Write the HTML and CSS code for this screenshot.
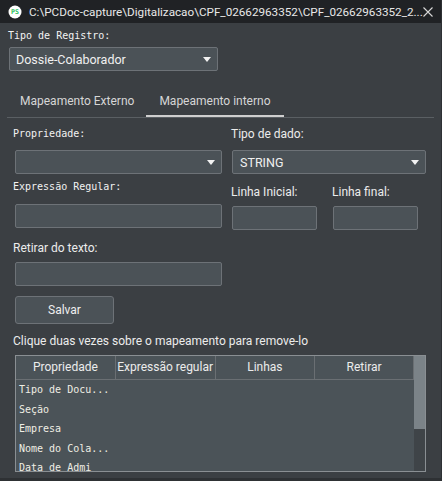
FILE: index.html
```html
<!DOCTYPE html>
<html>
<head>
<meta charset="utf-8">
<link rel="stylesheet" href="styles.css">
</head>
<body>
<div class="window">
  <div class="titlebar">
    <svg class="app-icon" width="14" height="14" viewBox="0 0 14 14">
      <circle cx="7" cy="7" r="6.5" fill="#ffffff"/>
      <text x="7" y="9.3" text-anchor="middle" font-family="DejaVu Sans Mono, monospace" font-size="6.5" font-weight="bold" fill="#1fbf5a">PS</text>
    </svg>
    <span class="title">C:\PCDoc-capture\Digitalizacao\CPF_02662963352\CPF_02662963352_2...</span>
    <svg class="close" width="10" height="10" viewBox="0 0 10 10">
      <path d="M0.5 0.5 L9.5 9.5 M9.5 0.5 L0.5 9.5" stroke="#d8d8d8" stroke-width="1.1" fill="none"/>
    </svg>
  </div>
  <div class="content">
    <div class="mono lbl lbl-tipo">Tipo de Registro:</div>
    <div class="combo combo-main"><span>Dossie-Colaborador</span><i class="arrow"></i></div>

    <div class="tabs">
      <div class="tab tab-ext">Mapeamento Externo</div>
      <div class="tab active">Mapeamento interno</div>
    </div>

    <div class="form">
      <div class="row row1">
        <div class="col left">
          <div class="mono lbl">Propriedade:</div>
          <div class="combo combo-prop"><span></span><i class="arrow"></i></div>
        </div>
        <div class="col right">
          <div class="sans lbl">Tipo de dado:</div>
          <div class="combo combo-type"><span>STRING</span><i class="arrow"></i></div>
        </div>
      </div>

      <div class="row row2">
        <div class="col left">
          <div class="mono lbl">Expressão Regular:</div>
          <div class="input input-wide"></div>
        </div>
        <div class="col right2">
          <div class="sub">
            <div class="sans lbl">Linha Inicial:</div>
            <div class="input input-small"></div>
          </div>
          <div class="sub">
            <div class="sans lbl">Linha final:</div>
            <div class="input input-small"></div>
          </div>
        </div>
      </div>

      <div class="row row3">
        <div class="col left">
          <div class="sans lbl">Retirar do texto:</div>
          <div class="input input-wide"></div>
        </div>
      </div>

      <button class="btn">Salvar</button>

      <div class="sans lbl hint">Clique duas vezes sobre o mapeamento para remove-lo</div>

      <div class="table">
        <div class="table-main">
          <div class="thead">
            <div class="th">Propriedade</div>
            <div class="th">Expressão regular</div>
            <div class="th">Linhas</div>
            <div class="th">Retirar</div>
          </div>
          <div class="tbody">
            <div class="tr mono">Tipo de Docu...</div>
            <div class="tr mono">Seção</div>
            <div class="tr mono">Empresa</div>
            <div class="tr mono">Nome do Cola...</div>
            <div class="tr mono">Data de Admi</div>
          </div>
        </div>
        <div class="scrollbar"><div class="thumb"></div></div>
      </div>
    </div>
  </div>
</div>
</body>
</html>
```

FILE: styles.css
```css
html, body {
  margin: 0;
  padding: 0;
  background: #3b3f43;
}
.window {
  width: 442px;
  height: 481px;
  background: #3b3f43;
  box-sizing: border-box;
  border-right: 1px solid #2e3134;
  border-bottom: 3px solid #2e3134;
  overflow: hidden;
  color: #e6e6e6;
  font-family: "Open Sans", "Noto Sans", sans-serif;
}
.titlebar {
  height: 23px;
  background: #202225;
  display: flex;
  align-items: center;
  padding-left: 8px;
  box-sizing: border-box;
}
.app-icon { flex: none; }
.title {
  margin-left: 7px;
  font-family: "Roboto", "Open Sans", sans-serif;
  font-size: 11.7px;
  color: #e8e8e8;
  white-space: nowrap;
  flex: 1;
}
.close {
  flex: none;
  margin-right: 12px;
}
.content {
  padding: 0 8px;
}
.mono {
  font-family: "DejaVu Sans Mono", "Liberation Mono", monospace;
  font-size: 10px;
}
.sans {
  font-family: "Roboto", "Open Sans", sans-serif;
  font-size: 12px;
}
.lbl {
  line-height: 14px;
  color: #ececec;
  white-space: nowrap;
}
.mono.lbl {
  color: #f2f2f2;
}
.lbl-tipo {
  margin-top: 6px;
}
.combo, .input {
  box-sizing: border-box;
  background: #4b5257;
  border: 1px solid #6d7277;
  border-radius: 2px;
}
.combo {
  display: flex;
  align-items: center;
  justify-content: space-between;
  padding: 0 6px 0 6px;
  font-family: "Roboto", "Open Sans", sans-serif;
  font-size: 12.5px;
  color: #f0f0f0;
}
.arrow {
  width: 0;
  height: 0;
  border-left: 4.5px solid transparent;
  border-right: 4.5px solid transparent;
  border-top: 5px solid #f2f2f2;
  margin-top: 1px;
}
.combo-main {
  margin-top: 4px;
  margin-left: 1px;
  width: 209px;
  height: 24px;
}
.tabs {
  display: flex;
  margin-top: 17px;
  margin-left: -1px;
  width: 427px;
  border-bottom: 1px solid #5a5f63;
  height: 30px;
  box-sizing: border-box;
}
.tab {
  padding: 0 13px;
  font-family: "Roboto", "Open Sans", sans-serif;
  font-size: 12px;
  color: #d6d6d6;
  line-height: 27px;
  height: 29px;
  box-sizing: border-box;
  border-bottom: 2px solid transparent;
}
.tab.active {
  border-bottom-color: #cfcfcf;
  margin-left: -1px;
}
.form {
  padding-left: 5px;
}
.row {
  display: flex;
}
.col {
  display: flex;
  flex-direction: column;
}
.col.left {
  width: 218px;
}
.col.left .combo, .col.left .input {
  margin-left: 2px;
}
.row1 {
  margin-top: 9px;
}
.row1 .combo {
  margin-top: 9px;
  height: 24px;
}
.combo-prop { width: 207px; }
.combo-type { width: 194px; margin-left: 1px; padding-left: 7px; }
.row2 {
  margin-top: 6px;
}
.input-wide {
  width: 207px;
  height: 24px;
  margin-top: 10px;
}
.right2 {
  display: flex;
  flex-direction: row;
  padding-top: 5px;
}
.sub {
  display: flex;
  flex-direction: column;
  width: 101px;
}
.input-small {
  width: 85px;
  height: 24px;
  margin-top: 7px;
  margin-left: 1px;
}
.row3 {
  margin-top: 11px;
}
.row3 .input-wide {
  margin-top: 7px;
}
.btn {
  display: block;
  margin-top: 10px;
  margin-left: 2px;
  width: 99px;
  height: 28px;
  background: #4b5257;
  border: 1px solid #6d7277;
  border-radius: 3px;
  color: #efefef;
  font-family: "Roboto", "Open Sans", sans-serif;
  font-size: 12px;
  padding: 0;
}
.hint {
  margin-top: 10px;
}
.table {
  margin-top: 7px;
  margin-left: 2px;
  width: 411px;
  height: 117px;
  box-sizing: border-box;
  border: 1px solid #8a8f93;
  background: #4b5358;
  display: flex;
  overflow: hidden;
}
.table-main {
  flex: 1;
  overflow: hidden;
}
.thead {
  display: flex;
  height: 24px;
  box-sizing: border-box;
  border-bottom: 1px solid #6a6f73;
}
.th {
  width: 100px;
  box-sizing: border-box;
  border-right: 1px solid #6a6f73;
  text-align: center;
  font-family: "Roboto", "Open Sans", sans-serif;
  font-size: 12px;
  line-height: 22px;
  color: #ececec;
  white-space: nowrap;
  overflow: hidden;
}
.th:last-child {
  width: 99px;
}
.tbody {
  padding-top: 0;
}
.tr {
  height: 19.6px;
  line-height: 19.6px;
  padding-left: 3px;
  color: #efeee4;
  white-space: nowrap;
}
.scrollbar {
  width: 11px;
  flex: none;
  background: #3f4448;
}
.thumb {
  height: 73px;
  background: #7b8388;
}
```
